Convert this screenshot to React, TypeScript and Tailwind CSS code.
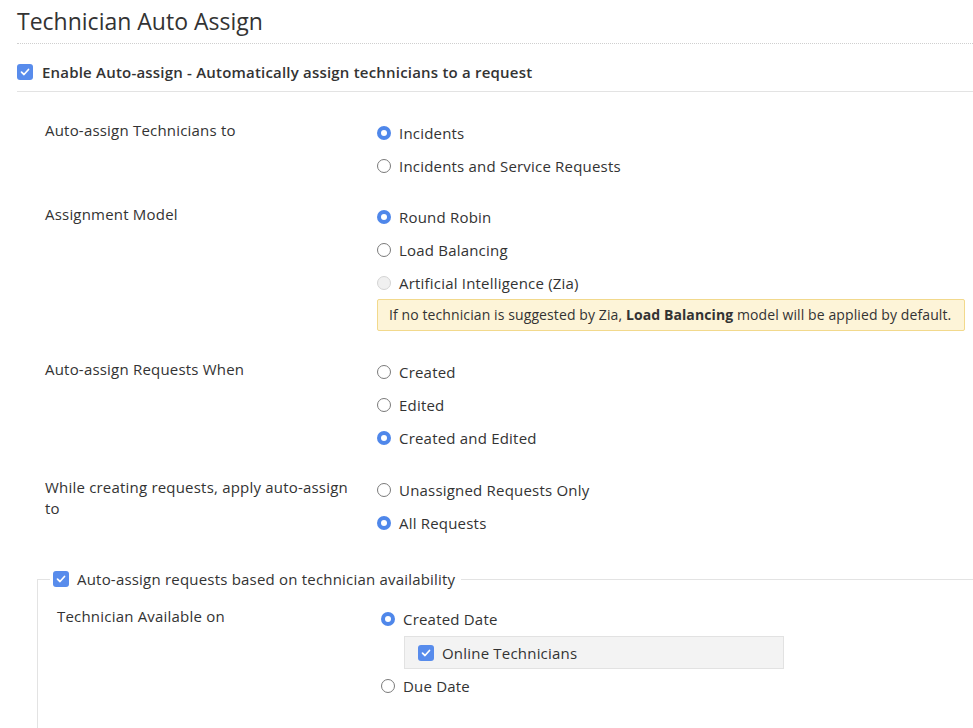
import React from 'react';

type Option = { label: string; checked?: boolean; disabled?: boolean };

function Radio({ checked, disabled }: { checked?: boolean; disabled?: boolean }) {
  if (checked) {
    return (
      <span className="flex h-[14px] w-[14px] shrink-0 items-center justify-center rounded-full bg-[#4f87ea]">
        <span className="h-[6px] w-[6px] rounded-full bg-white" />
      </span>
    );
  }
  if (disabled) {
    return <span className="h-[14px] w-[14px] shrink-0 rounded-full border border-[#d4d4d4] bg-[#f0f0f0]" />;
  }
  return <span className="h-[14px] w-[14px] shrink-0 rounded-full border border-[#7a7a7a] bg-white" />;
}

function Checkbox() {
  return (
    <span className="flex h-[16px] w-[16px] shrink-0 items-center justify-center rounded-[3px] bg-[#588cec]">
      <svg width="10" height="8" viewBox="0 0 10 8" fill="none">
        <path d="M1.5 4.2 L4 6.5 L8.5 1.5" stroke="white" strokeWidth="1.7" strokeLinecap="round" strokeLinejoin="round" />
      </svg>
    </span>
  );
}

function RadioRow({ option }: { option: Option }) {
  return (
    <div className="flex h-[33px] items-center gap-[8px]">
      <Radio checked={option.checked} disabled={option.disabled} />
      <span className="text-[15px] leading-[20px] tracking-[0.2px]">{option.label}</span>
    </div>
  );
}

function FormRow({
  label,
  options,
  className = '',
  children,
}: {
  label: string;
  options: Option[];
  className?: string;
  children?: React.ReactNode;
}) {
  return (
    <div className={`flex ${className}`}>
      <div className="w-[332px] shrink-0 pt-[4px] pr-[20px] text-[15px] leading-[21px] tracking-[0.2px]">{label}</div>
      <div className="flex-1">
        {options.map((o) => (
          <RadioRow key={o.label} option={o} />
        ))}
        {children}
      </div>
    </div>
  );
}

export default function App() {
  return (
    <div className="min-h-screen overflow-hidden bg-white pl-[17px] font-['Open_Sans',sans-serif] text-[#333]">
      <h1 className="border-b border-dotted border-[#cfcfcf] pt-[6px] pb-[7px] text-[23px] leading-[30px] font-normal">
        Technician Auto Assign
      </h1>

      <div className="flex items-center gap-[9px] border-b border-[#e3e3e3] pt-[20px] pb-[11px]">
        <Checkbox />
        <span className="text-[15px] leading-[16px] font-semibold tracking-[0.2px]">
          Enable Auto-assign - Automatically assign technicians to a request
        </span>
      </div>

      <div className="pl-[28px] pt-[24px]">
        <FormRow
          label="Auto-assign Technicians to"
          options={[{ label: 'Incidents', checked: true }, { label: 'Incidents and Service Requests' }]}
        />
        <FormRow
          className="mt-[18px]"
          label="Assignment Model"
          options={[
            { label: 'Round Robin', checked: true },
            { label: 'Load Balancing' },
            { label: 'Artificial Intelligence (Zia)', disabled: true },
          ]}
        >
          <div className="mr-[8px] mb-[5px] whitespace-nowrap rounded-[2px] border border-[#f2d98c] bg-[#fdf4d8] px-[11px] py-[5px] text-[14px] leading-[20px] tracking-[0.1px]">
            If no technician is suggested by Zia, <b className="font-bold">Load Balancing</b> model will be applied by
            default.
          </div>
        </FormRow>
        <FormRow
          className="mt-[19px]"
          label="Auto-assign Requests When"
          options={[{ label: 'Created' }, { label: 'Edited' }, { label: 'Created and Edited', checked: true }]}
        />
        <FormRow
          className="mt-[19px]"
          label="While creating requests, apply auto-assign to"
          options={[{ label: 'Unassigned Requests Only' }, { label: 'All Requests', checked: true }]}
        />
      </div>

      <fieldset className="-mr-[20px] mt-[30px] ml-[20px] border-t border-l border-[#e3e3e3] pl-[12px] pb-[80px]">
        <legend className="pl-[3px] pr-[6px]">
          <div className="flex h-[20px] items-center gap-[8px]">
            <Checkbox />
            <span className="text-[15px] leading-[20px] tracking-[0.2px]">
              Auto-assign requests based on technician availability
            </span>
          </div>
        </legend>
        <div className="flex pt-[13px] pl-[7px]">
          <div className="w-[324px] shrink-0 pt-[4px] text-[15px] leading-[21px] tracking-[0.2px]">
            Technician Available on
          </div>
          <div className="flex-1">
            <RadioRow option={{ label: 'Created Date', checked: true }} />
            <div className="mt-[1px] ml-[23px] flex h-[33px] w-[380px] items-center gap-[8px] border border-[#e2e2e2] bg-[#f3f3f3] pl-[13px]">
              <Checkbox />
              <span className="text-[15px] leading-[20px] tracking-[0.2px]">Online Technicians</span>
            </div>
            <RadioRow option={{ label: 'Due Date' }} />
          </div>
        </div>
      </fieldset>
    </div>
  );
}
